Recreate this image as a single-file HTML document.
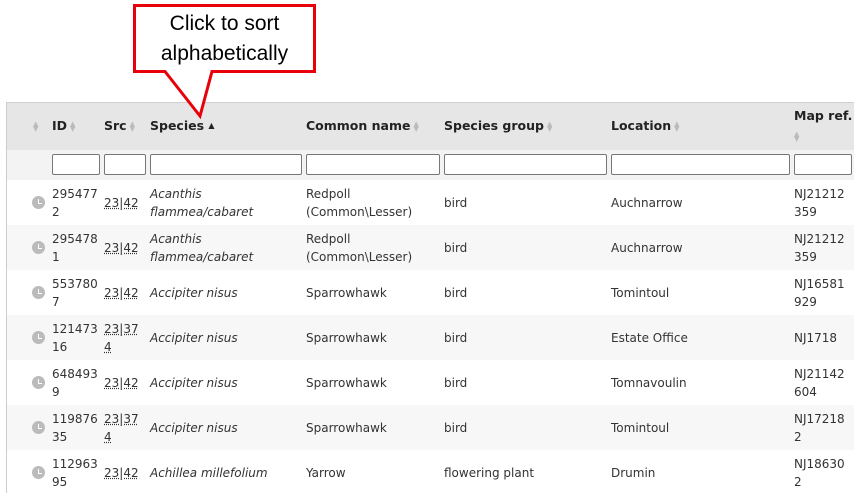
<!DOCTYPE html>
<html><head><meta charset="utf-8"><style>
body{margin:0;width:854px;height:493px;background:#fff;position:relative;overflow:hidden;font-family:"DejaVu Sans","Liberation Sans",sans-serif;font-size:12px;color:#333}
.a{position:absolute}
.hdr{left:6px;top:102px;width:848px;height:48px;background:#e6e6e6;border-top:1px solid #d0d0d0}
.flt{left:6px;top:150px;width:848px;height:30px;background:#f3f3f3;border-bottom:2px solid #e0e0e0}
.lb{left:6px;top:102px;width:1px;height:391px;background:#ccc}
.h{position:absolute;top:118px;font-weight:bold;font-size:12.5px;color:#222}
.s{display:inline-block;vertical-align:middle;color:#bbb;font-size:7px;line-height:5px;font-weight:normal;margin-left:3px}
.in{position:absolute;top:154px;border:1px solid #777;border-radius:2px;background:#fff;box-sizing:border-box;height:21px}
.row{position:absolute;left:7px;width:847px;height:45px}
.c{position:absolute;top:0;height:45px;display:flex;align-items:center;line-height:18px}
.u{text-decoration:underline dotted;color:#333}
i{font-style:italic}
.ic{position:absolute;left:25px;top:16px;width:13px;height:13px;border-radius:50%;background:#bbb}
.ic:after{content:"";position:absolute;left:6px;top:3px;width:3px;height:4px;border-left:1.5px solid #fff;border-bottom:1.5px solid #fff}
</style></head><body>
<div class="a hdr"></div>
<div class="a flt"></div>
<div class="a lb"></div>
<div class="h" style="left:30px"><span class="s">▲<br>▼</span></div>
<div class="h" style="left:52px">ID<span class="s">▲<br>▼</span></div>
<div class="h" style="left:104px">Src<span class="s">▲<br>▼</span></div>
<div class="h" style="left:150px">Species <span style="font-size:8px;vertical-align:2px">▲</span></div>
<div class="h" style="left:306px">Common name<span class="s">▲<br>▼</span></div>
<div class="h" style="left:444px">Species group<span class="s">▲<br>▼</span></div>
<div class="h" style="left:611px">Location<span class="s">▲<br>▼</span></div>
<div class="h" style="left:794px;top:106px;line-height:20px">Map ref.<br><span class="s" style="margin-left:0">▲<br>▼</span></div>
<div class="in" style="left:52px;width:48px"></div>
<div class="in" style="left:104px;width:42px"></div>
<div class="in" style="left:150px;width:152px"></div>
<div class="in" style="left:306px;width:134px"></div>
<div class="in" style="left:444px;width:163px"></div>
<div class="in" style="left:611px;width:179px"></div>
<div class="in" style="left:794px;width:58px"></div>

<div class="row" style="top:180px;background:#fff"><div class="ic"></div><div class="c" style="left:45px">295477<br>2</div><div class="c" style="left:97px"><span class="u">23|42</span></div><div class="c" style="left:143px"><i>Acanthis<br>flammea/cabaret</i></div><div class="c" style="left:299px">Redpoll<br>(Common\Lesser)</div><div class="c" style="left:437px">bird</div><div class="c" style="left:604px">Auchnarrow</div><div class="c" style="left:787px">NJ21212<br>359</div></div>
<div class="row" style="top:225px;background:#f7f7f7"><div class="ic"></div><div class="c" style="left:45px">295478<br>1</div><div class="c" style="left:97px"><span class="u">23|42</span></div><div class="c" style="left:143px"><i>Acanthis<br>flammea/cabaret</i></div><div class="c" style="left:299px">Redpoll<br>(Common\Lesser)</div><div class="c" style="left:437px">bird</div><div class="c" style="left:604px">Auchnarrow</div><div class="c" style="left:787px">NJ21212<br>359</div></div>
<div class="row" style="top:270px;background:#fff"><div class="ic"></div><div class="c" style="left:45px">553780<br>7</div><div class="c" style="left:97px"><span class="u">23|42</span></div><div class="c" style="left:143px"><i>Accipiter nisus</i></div><div class="c" style="left:299px">Sparrowhawk</div><div class="c" style="left:437px">bird</div><div class="c" style="left:604px">Tomintoul</div><div class="c" style="left:787px">NJ16581<br>929</div></div>
<div class="row" style="top:315px;background:#f7f7f7"><div class="ic"></div><div class="c" style="left:45px">121473<br>16</div><div class="c" style="left:97px"><span class="u">23|37<br>4</span></div><div class="c" style="left:143px"><i>Accipiter nisus</i></div><div class="c" style="left:299px">Sparrowhawk</div><div class="c" style="left:437px">bird</div><div class="c" style="left:604px">Estate Office</div><div class="c" style="left:787px">NJ1718</div></div>
<div class="row" style="top:360px;background:#fff"><div class="ic"></div><div class="c" style="left:45px">648493<br>9</div><div class="c" style="left:97px"><span class="u">23|42</span></div><div class="c" style="left:143px"><i>Accipiter nisus</i></div><div class="c" style="left:299px">Sparrowhawk</div><div class="c" style="left:437px">bird</div><div class="c" style="left:604px">Tomnavoulin</div><div class="c" style="left:787px">NJ21142<br>604</div></div>
<div class="row" style="top:405px;background:#f7f7f7"><div class="ic"></div><div class="c" style="left:45px">119876<br>35</div><div class="c" style="left:97px"><span class="u">23|37<br>4</span></div><div class="c" style="left:143px"><i>Accipiter nisus</i></div><div class="c" style="left:299px">Sparrowhawk</div><div class="c" style="left:437px">bird</div><div class="c" style="left:604px">Tomintoul</div><div class="c" style="left:787px">NJ17218<br>2</div></div>
<div class="row" style="top:450px;background:#fff"><div class="ic"></div><div class="c" style="left:45px">112963<br>95</div><div class="c" style="left:97px"><span class="u">23|42</span></div><div class="c" style="left:143px"><i>Achillea millefolium</i></div><div class="c" style="left:299px">Yarrow</div><div class="c" style="left:437px">flowering plant</div><div class="c" style="left:604px">Drumin</div><div class="c" style="left:787px">NJ18630<br>2</div></div>

<svg class="a" style="left:0;top:0" width="854" height="130">
<path d="M134.5 5.5 H314.5 V71.5 H212 L200 116 L165 71.5 H134.5 Z" fill="#fff" stroke="#e8000b" stroke-width="3" stroke-linejoin="miter"/>
</svg>
<div class="a" style="left:134px;top:9px;width:181px;text-align:center;font-family:'Liberation Sans',sans-serif;font-size:21px;line-height:30px;color:#000">Click to sort<br>alphabetically</div>
</body></html>
